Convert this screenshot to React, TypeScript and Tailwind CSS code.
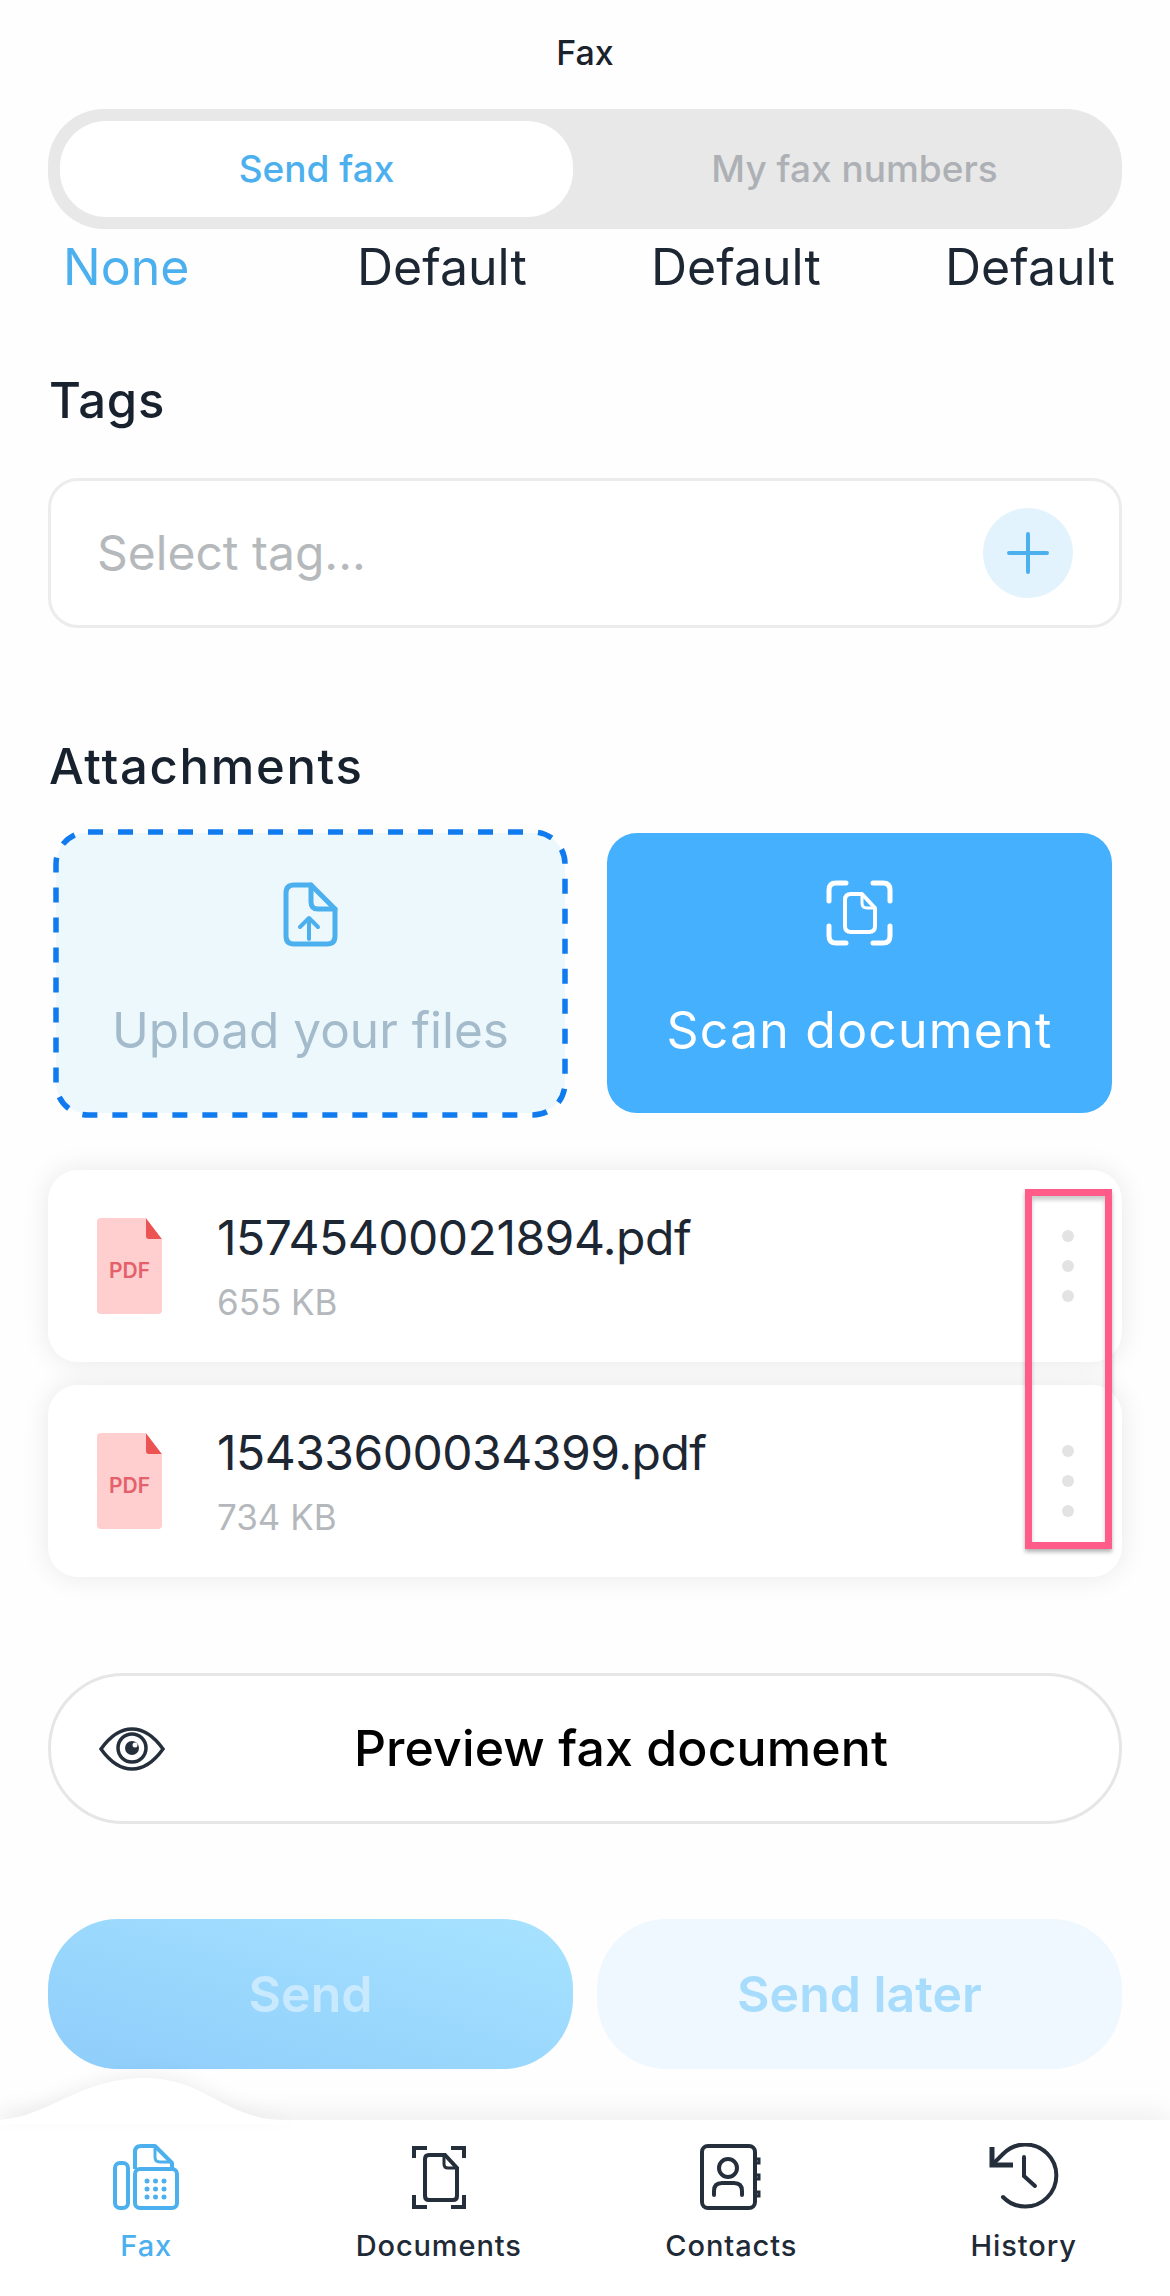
const F = "font-['Inter','Liberation_Sans',sans-serif]";

function Pdf() {
  return (
    <div className="relative w-[65px] h-[96px] shrink-0 rounded-[4px] bg-[#ffcfcf]">
      <svg className="absolute right-0 top-0" width="16" height="21" viewBox="0 0 16 21">
        <path d="M0 0 L16 21 H3 Q0 21 0 18 Z" fill="#ec5454" />
        <path d="M0 0 H16 V21 Z" fill="#ffffff" />
      </svg>
      <div className="absolute inset-x-0 top-[41px] text-center text-[21px] leading-[24px] font-semibold text-[#e5606a]">PDF</div>
    </div>
  );
}

function FileCard({ name, size }: { name: string; size: string }) {
  return (
    <div className="h-[192px] rounded-[30px] bg-white flex items-center pl-[49px] pr-[48px] shadow-[0_0_28px_rgba(0,0,0,0.09)]">
      <Pdf />
      <div className="ml-[55px] flex-1 flex flex-col">
        <div className="h-[60px] flex items-center text-[48px] tracking-[-0.5px] text-[#1d2733]">{name}</div>
        <div className="h-[44px] mt-[12px] flex items-center text-[35px] text-[#b4b8bc]">{size}</div>
      </div>
      <div className="flex flex-col gap-[18px]">
        <div className="w-[12px] h-[12px] rounded-full bg-[#e3e3e3]" />
        <div className="w-[12px] h-[12px] rounded-full bg-[#e3e3e3]" />
        <div className="w-[12px] h-[12px] rounded-full bg-[#e3e3e3]" />
      </div>
    </div>
  );
}

function FaxIcon() {
  return (
    <svg width="68" height="66" viewBox="0 0 68 66" fill="none" stroke="#4db0ee" strokeWidth="4" strokeLinejoin="round">
      <rect x="3" y="19" width="13" height="45" rx="5" />
      <rect x="23" y="25" width="42" height="39" rx="5" />
      <path d="M23 25 V8 Q23 2 29 2 H43 L60 19 V27" />
      <path d="M43 3 V13 Q43 18 48 18 H59" strokeWidth="3" />
      <g fill="#4db0ee" stroke="none">
        <circle cx="35" cy="37" r="2.5" /><circle cx="43.500" cy="37" r="2.5" /><circle cx="52" cy="37" r="2.5" />
        <circle cx="35" cy="45" r="2.5" /><circle cx="43.500" cy="45" r="2.5" /><circle cx="52" cy="45" r="2.5" />
        <circle cx="35" cy="53" r="2.500" /><circle cx="43.500" cy="53" r="2.5" /><circle cx="52" cy="53" r="2.5" />
      </g>
    </svg>
  );
}

function DocsIcon() {
  return (
    <svg width="54" height="64" viewBox="0 0 54 64" fill="none" stroke="#252f3c" strokeWidth="4">
      <path d="M2 13 V3 H15 M39 3 H52 V13 M2 50 V62 H15 M39 62 H52 V50" />
      <path d="M13 14 Q13 10 17 10 H33 L45 23 V51 Q45 55 41 55 H17 Q13 55 13 51 Z" />
      <path d="M32 10 V19 Q32 23 36 23 H45" strokeWidth="3" />
    </svg>
  );
}

function ContactsIcon() {
  return (
    <svg width="62" height="66" viewBox="0 0 62 66" fill="none" stroke="#252f3c" strokeWidth="4" strokeLinecap="round">
      <rect x="2" y="2" width="53" height="62" rx="6" />
      <circle cx="28" cy="24" r="9" />
      <path d="M14 51 V47 Q14 39 22 39 H34 Q42 39 42 47 V51" />
      <path d="M57 15 H59 V19 H57 M57 31 H59 V35 H57 M57 48 H59 V52 H57" strokeWidth="3" />
    </svg>
  );
}

function HistoryIcon() {
  return (
    <svg width="70" height="68" viewBox="0 0 70 68" fill="none" stroke="#252f3c" strokeWidth="4" strokeLinecap="round">
      <path d="M3 22 L14 11 A31 31 0 1 1 14 54" />
      <path d="M3 4 V22 H24" strokeLinecap="butt" strokeWidth="5" />
      <path d="M35 14 V33 L46 43" />
    </svg>
  );
}

function NavItem({ icon, label, active }: { icon: React.ReactNode; label: string; active?: boolean }) {
  return (
    <div className="flex-1 flex flex-col items-center">
      <div className="h-[68px] flex items-center justify-center">{icon}</div>
      <div className={`mt-[17px] text-[29px] leading-[36px] font-medium tracking-[0.9px] ${active ? "text-[#4db0ee]" : "text-[#1f2a37]"}`}>{label}</div>
    </div>
  );
}

export default function App() {
  return (
    <div className={`${F} relative w-[1170px] h-[2296px] overflow-hidden bg-[#fefefe] flex flex-col`}>
      <div className="h-[109px] pb-[4px] flex items-center justify-center text-[34px] font-medium text-[#1a222c]">Fax</div>

      <div className="mx-[48px] h-[120px] rounded-[56px] bg-[#e8e8e8] p-[12px] flex">
        <div className="w-[513px] rounded-[46px] bg-white flex items-center justify-center text-[37px] font-medium text-[#4db0ee]">Send fax</div>
        <div className="flex-1 pl-[26px] flex items-center justify-center text-[37px] font-medium text-[#adb1b5]">My fax numbers</div>
      </div>

      <div className="h-[76px] pl-[63px] flex items-center text-[50px] text-[#1d2733]">
        <div className="w-[294px] shrink-0 text-[#4db0ee]">None</div>
        <div className="w-[294px] shrink-0">Default</div>
        <div className="w-[294px] shrink-0">Default</div>
        <div>Default</div>
      </div>

      <div className="mt-[66px] ml-[49px] h-[60px] flex items-center text-[49px] tracking-[0.8px] font-medium text-[#18222e]">Tags</div>

      <div className="mt-[47px] mx-[48px] h-[150px] rounded-[30px] border-[3px] border-[#ececec] bg-white pl-[46px] pr-[46px] flex items-center justify-between">
        <span className="text-[48px] text-[#b5b9bc]">Select tag...</span>
        <div className="w-[90px] h-[90px] rounded-full bg-[#e3f3fd] flex items-center justify-center">
          <svg width="44" height="44" viewBox="0 0 44 44" stroke="#4db0ee" strokeWidth="4" strokeLinecap="round">
            <path d="M22 3 V41 M3 22 H41" />
          </svg>
        </div>
      </div>

      <div className="mt-[109px] ml-[49px] h-[60px] flex items-center text-[49px] tracking-[1.7px] font-medium text-[#18222e]">Attachments</div>

      <div className="mt-[36px] ml-[56px] w-[1056px] h-[280px] flex gap-[42px]">
        <div className="relative w-[509px] rounded-[30px] bg-[#edf8fd] flex flex-col items-center">
          <svg className="absolute left-0 top-0 overflow-visible" width="509" height="280" viewBox="0 0 509 280" fill="none" stroke="#0f7bef" strokeWidth="5.500" strokeDasharray="15 15">
            <rect x="0" y="-1" width="509" height="283" rx="32" />
          </svg>
          <svg className="mt-[49px]" width="55" height="65" viewBox="0 0 55 65" fill="none" stroke="#4db0ee" strokeWidth="5" strokeLinecap="round" strokeLinejoin="round">
            <path d="M3 11 Q3 3 11 3 H28 L52 27 V54 Q52 62 44 62 H11 Q3 62 3 54 Z" />
            <path d="M28 3 V20 Q28 27 35 27 H52" />
            <path d="M26 57 V37 M17 45 L26 36 L35 45" strokeWidth="4" />
          </svg>
          <div className="mt-[53px] text-[49.500px] leading-[60px] text-[#a3bbca]">Upload your files</div>
        </div>
        <div className="flex-1 rounded-[30px] bg-[#45b0fe] flex flex-col items-center">
          <svg className="mt-[47px]" width="67" height="66" viewBox="0 0 67 66" fill="none" stroke="#ffffff" strokeWidth="5" strokeLinecap="round" strokeLinejoin="round">
            <path d="M3 21 V10 Q3 3 10 3 H20 M47 3 H57 Q64 3 64 10 V21 M3 46 V56 Q3 63 10 63 H20 M47 63 H57 Q64 63 64 56 V46" />
            <path d="M19 20 Q19 14 25 14 H36 L49 28 V46 Q49 52 43 52 H25 Q19 52 19 46 Z" strokeWidth="4" />
            <path d="M36 15 V23 Q36 28 41 28 H48" strokeWidth="3" />
          </svg>
          <div className="mt-[54px] text-[50px] tracking-[1.200px] leading-[60px] text-white">Scan document</div>
        </div>
      </div>

      <div className="relative mt-[57px] mx-[48px] flex flex-col gap-[23px]">
        <FileCard name="15745400021894.pdf" size="655 KB" />
        <FileCard name="15433600034399.pdf" size="734 KB" />
        <div className="absolute left-[977px] top-[19px] w-[87px] h-[360px] border-[7px] border-[#ff5c8a] shadow-[0_3px_4px_rgba(0,0,0,0.3),inset_0_4px_4px_rgba(0,0,0,0.2)]" />
      </div>

      <div className="relative mt-[96px] mx-[48px] h-[151px] rounded-full border-[3px] border-[#e6e6e6] bg-white flex items-center justify-center pl-[72px]">
        <svg className="absolute left-[48px] top-[51px]" width="66" height="44" viewBox="0 0 66 44" fill="none" stroke="#252f3c" strokeWidth="3.500">
          <path d="M2 22 C12 8 22 2 33 2 C44 2 54 8 64 22 C54 36 44 42 33 42 C22 42 12 36 2 22 Z" />
          <circle cx="33" cy="21" r="14" />
          <circle cx="33" cy="21" r="7" fill="#252f3c" stroke="none" />
          <circle cx="36" cy="18" r="2.5" fill="#ffffff" stroke="none" />
        </svg>
        <span className="text-[50px] font-medium tracking-[0.1px] text-black">Preview fax document</span>
      </div>

      <div className="mt-[95px] mx-[48px] h-[150px] flex gap-[24px]">
        <div className="flex-1 rounded-[70px] bg-linear-to-tr from-[#8fcdfb] to-[#a7e3ff] flex items-center justify-center text-[50px] font-semibold text-[#c9eafe]">Send</div>
        <div className="flex-1 rounded-[70px] bg-[#eff8fe] flex items-center justify-center text-[50px] font-semibold text-[#a8dcfd]">Send later</div>
      </div>

      <div className="relative mt-[51px] h-[176px] bg-white pt-[23px] flex shadow-[0_-8px_24px_rgba(0,0,0,0.06)]">
        <svg className="absolute left-0 top-[-44px] drop-shadow-[0_-5px_8px_rgba(0,0,0,0.05)]" width="290" height="48" viewBox="0 0 290 48">
          <path d="M0 44 C50 40 80 2 145 2 C205 2 225 44 285 44 V48 H0 Z" fill="#ffffff" />
        </svg>
        <NavItem icon={<FaxIcon />} label="Fax" active />
        <NavItem icon={<DocsIcon />} label="Documents" />
        <NavItem icon={<ContactsIcon />} label="Contacts" />
        <NavItem icon={<HistoryIcon />} label="History" />
      </div>
    </div>
  );
}
